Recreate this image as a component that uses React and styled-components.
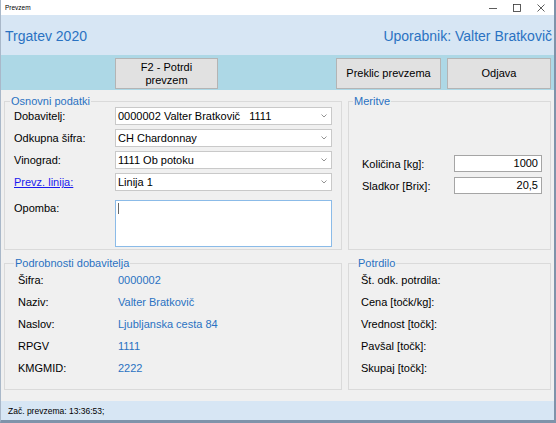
import React from 'react';
import styled, {createGlobalStyle} from 'styled-components';

const Global = createGlobalStyle`
    html, body {
        margin: 0;
        padding: 0;
        background: #fff;
    }
    body {
        font-family: "Liberation Sans", Arial, sans-serif;
    }
`;

const Window = styled.div`
    width: 556px;
    height: 423px;
    box-sizing: border-box;
    display: flex;
    flex-direction: column;
    border-left: 1px solid #a9b8c9;
    border-right: 2px solid #7f93aa;
    border-bottom: 3px solid #7f93aa;
    background: #f0f0f0;
    overflow: hidden;
`;

const TitleBar = styled.div`
    height: 15px;
    flex: none;
    background: #fff;
    display: flex;
    align-items: center;
    justify-content: space-between;
    padding-left: 4px;
    font-size: 6.5px;
    color: #000;
`;

const WinButtons = styled.div`
    display: flex;
    height: 100%;
    padding-right: 1px;
`;

const WinButton = styled.span`
    width: 24px;
    display: flex;
    align-items: center;
    justify-content: center;
    color: #333;
`;

const Header = styled.div`
    height: 40px;
    flex: none;
    background: #d7e6f4;
    display: flex;
    align-items: center;
    justify-content: space-between;
    padding: 2px 2px 0 4px;
    box-sizing: border-box;
`;

const HeaderText = styled.span`
    font-size: 14px;
    color: #2a72c2;
`;

const Toolbar = styled.div`
    height: 35px;
    flex: none;
    background: #add8e6;
    display: flex;
    align-items: flex-start;
    padding: 3px 3px 0 114px;
    box-sizing: border-box;
    gap: 6px;
`;

const Button = styled.button`
    width: ${p => p.w}px;
    height: 31px;
    margin-left: ${p => p.push ? 'auto' : '0'};
    background: #e1e1e1;
    border: 1px solid #b4b4b4;
    font-family: "Liberation Sans", Arial, sans-serif;
    font-size: 11px;
    line-height: 13px;
    color: #000;
    padding: 0;
`;

const Main = styled.div`
    flex: 1;
    display: grid;
    grid-template-columns: 338px 203px;
    grid-template-rows: 155px 133px;
    column-gap: 6px;
    row-gap: 7px;
    padding: 5px 3px 0 3px;
`;

const Group = styled.fieldset`
    margin: 0;
    padding: ${p => p.pad || '2px 8px'};
    border: 1px solid #dadada;
    min-width: 0;
    box-sizing: border-box;
    height: 100%;
`;

const Legend = styled.legend`
    font-size: 11px;
    color: #2a72c2;
    padding: 0 1px;
    margin-left: -4px;
`;

const FormRow = styled.div`
    display: flex;
    align-items: ${p => p.top ? 'flex-start' : 'center'};
    height: ${p => p.h || 18}px;
    margin-top: ${p => p.top ? '9px' : '0'};
    margin-bottom: 4px;
`;

const Label = styled.span`
    width: ${p => p.w || 101}px;
    flex: none;
    font-size: 11px;
    color: ${p => p.link ? '#1a1aee' : '#000'};
    text-decoration: ${p => p.link ? 'underline' : 'none'};
    padding-top: ${p => p.top ? '2px' : '0'};
`;

const Combo = styled.div`
    width: 217px;
    height: 18px;
    box-sizing: border-box;
    background: #fff;
    border: 1px solid #c9c9c9;
    display: flex;
    align-items: center;
    justify-content: space-between;
    padding: 0 4px 0 2px;
    font-size: 11px;
    color: #000;
`;

const TextArea = styled.div`
    width: 217px;
    height: 47px;
    box-sizing: border-box;
    background: #fff;
    border: 1px solid #8bbbe8;
    padding: 2px 2px;
`;

const Caret = styled.span`
    display: block;
    width: 1px;
    height: 11px;
    background: #666;
`;

const Measures = styled.div`
    padding-top: 48px;
    padding-left: 5px;
`;

const MeasureRow = styled.div`
    display: flex;
    align-items: center;
    height: 17px;
    margin-bottom: 5px;
`;

const NumInput = styled.div`
    width: 92px;
    height: 17px;
    box-sizing: border-box;
    background: #fff;
    border: 1px solid #a5a5a5;
    font-size: 11px;
    text-align: right;
    padding: 1px 3px 0 0;
`;

const InfoRow = styled.div`
    display: flex;
    align-items: center;
    height: 22px;
`;

const Value = styled.span`
    font-size: 11px;
    color: #2a72c2;
`;

const StatusBar = styled.div`
    height: 19px;
    flex: none;
    background: #d7e6f4;
    display: flex;
    align-items: center;
    padding-left: 7px;
    font-size: 8.5px;
    color: #000;
`;

const Chevron = () => (
    <svg width="6" height="4" viewBox="0 0 6 4">
        <path d="M0.5 0.5 L3 3 L5.5 0.5" fill="none" stroke="#777" strokeWidth="0.8"/>
    </svg>
);

const combos = [
    {label: 'Dobavitelj:', value: '0000002 Valter Bratkovič\u00a0\u00a0 1111'},
    {label: 'Odkupna šifra:', value: 'CH Chardonnay'},
    {label: 'Vinograd:', value: '1111 Ob potoku'},
    {label: 'Prevz. linija:', value: 'Linija 1', link: true},
];

const supplier = [
    ['Šifra:', '0000002'],
    ['Naziv:', 'Valter Bratkovič'],
    ['Naslov:', 'Ljubljanska cesta 84'],
    ['RPGV', '1111'],
    ['KMGMID:', '2222'],
];

const receipt = ['Št. odk. potrdila:', 'Cena [točk/kg]:', 'Vrednost [točk]:', 'Pavšal [točk]:', 'Skupaj [točk]:'];

export default function App() {
    return (
        <>
            <Global/>
            <Window>
                <TitleBar>
                    <span>Prevzem</span>
                    <WinButtons>
                        <WinButton>
                            <svg width="8" height="8" viewBox="0 0 8 8"><path d="M0 4.5 H8" stroke="#333" strokeWidth="0.8"/></svg>
                        </WinButton>
                        <WinButton>
                            <svg width="8" height="8" viewBox="0 0 8 8"><rect x="0.5" y="0.5" width="7" height="7" fill="none" stroke="#333" strokeWidth="0.8"/></svg>
                        </WinButton>
                        <WinButton>
                            <svg width="8" height="8" viewBox="0 0 8 8"><path d="M0.5 0.5 L7.5 7.5 M7.5 0.5 L0.5 7.5" stroke="#333" strokeWidth="0.8"/></svg>
                        </WinButton>
                    </WinButtons>
                </TitleBar>
                <Header>
                    <HeaderText>Trgatev 2020</HeaderText>
                    <HeaderText>Uporabnik: Valter Bratkovič</HeaderText>
                </Header>
                <Toolbar>
                    <Button w={103}>F2 - Potrdi<br/>prevzem</Button>
                    <Button w={105} push>Preklic prevzema</Button>
                    <Button w={104}>Odjava</Button>
                </Toolbar>
                <Main>
                    <Group pad="0 9px">
                        <Legend>Osnovni podatki</Legend>
                        {combos.map((c, i) => (
                            <FormRow key={i}>
                                <Label link={c.link}>{c.label}</Label>
                                <Combo>{c.value}<Chevron/></Combo>
                            </FormRow>
                        ))}
                        <FormRow h={47} top>
                            <Label top>Opomba:</Label>
                            <TextArea><Caret/></TextArea>
                        </FormRow>
                    </Group>
                    <Group pad="0 8px">
                        <Legend>Meritve</Legend>
                        <Measures>
                            <MeasureRow>
                                <Label w={92}>Količina [kg]:</Label>
                                <NumInput>1000</NumInput>
                            </MeasureRow>
                            <MeasureRow>
                                <Label w={92}>Sladkor [Brix]:</Label>
                                <NumInput>20,5</NumInput>
                            </MeasureRow>
                        </Measures>
                    </Group>
                    <Group pad="0 13px">
                        <Legend>Podrobnosti dobavitelja</Legend>
                        {supplier.map(([l, v], i) => (
                            <InfoRow key={i}>
                                <Label w={100}>{l}</Label>
                                <Value>{v}</Value>
                            </InfoRow>
                        ))}
                    </Group>
                    <Group pad="0 12px">
                        <Legend>Potrdilo</Legend>
                        {receipt.map((l, i) => (
                            <InfoRow key={i}>
                                <Label w={150}>{l}</Label>
                            </InfoRow>
                        ))}
                    </Group>
                </Main>
                <StatusBar>Zač. prevzema: 13:36:53;</StatusBar>
            </Window>
        </>
    );
}
